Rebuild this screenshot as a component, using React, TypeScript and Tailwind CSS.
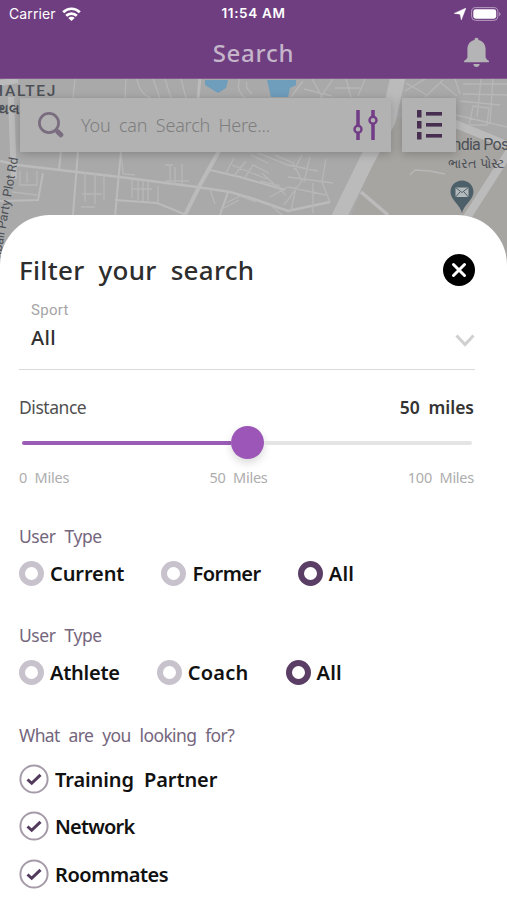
import React from "react";

function StatusBar() {
  return (
    <div className="relative flex h-[28px] items-center justify-between pl-[9px] pr-[6px] font-['Inter',sans-serif] text-white">
      <div className="flex items-center gap-[6px]">
        <span className="text-[14px] leading-none tracking-[0.12px]">Carrier</span>
        <svg width="19" height="14" viewBox="0 0 19 14" fill="none" stroke="#fff" strokeWidth="2.7">
          <path d="M1.2 5.2C5.8 .6 13.2 .6 17.8 5.2" />
          <path d="M4.2 8.7C7.1 5.8 11.9 5.8 14.8 8.7" />
          <path d="M9.5 13.900 6.300 11C8 9.200 11 9.200 12.700 11Z" fill="#fff" stroke="none" />
        </svg>
      </div>
      <span className="absolute inset-x-0 text-center text-[13.5px] font-semibold leading-none tracking-[0.65px]">11:54 AM</span>
      <div className="flex items-center gap-[5px]">
        <svg width="12" height="12" viewBox="0 0 12 12" fill="#fff">
          <path d="M12 0 7.300 12 6.100 6.200 0 5.400Z" stroke="#fff" strokeWidth=".4" />
        </svg>
        <svg width="30" height="14" viewBox="0 0 30 14">
          <rect x=".6" y=".6" width="26.3" height="12.8" rx="4" fill="none" stroke="#b69bc0" />
          <rect x="2.3" y="2.3" width="22.9" height="9.4" rx="2.4" fill="#fff" />
          <path d="M28.2 5v4.2c1.8-.8 1.8-3.4 0-4.2Z" fill="#b69bc0" />
        </svg>
      </div>
    </div>
  );
}

function Header() {
  return (
    <header className="h-[79px] border-b border-[#81598f] bg-[#6f3e81]">
      <StatusBar />
      <div className="relative flex h-[50px] items-center justify-center">
        <h1 className="text-[24px] font-medium leading-none tracking-[0.75px] text-[#c5b5ca]">Search</h1>
        <svg className="absolute right-[17px] top-[9px]" width="27" height="31" viewBox="0 0 27 31" fill="#b4b3b5">
          <path d="M13.5 .8c1.3 0 2 .9 2 2.2 4.7 1.1 7.1 4.7 7.1 9.4v8l1.5 2.4 1.8 1v1.5H1.1v-1.5l1.8-1 1.5-2.4v-8C4.4 7.7 6.8 4.1 11.5 3c0-1.3.7-2.2 2-2.2Z" />
          <path d="M10.3 27h6.4c-.3 2.1-1.4 3-3.2 3s-2.9-.9-3.2-3Z" />
        </svg>
      </div>
    </header>
  );
}

function MapBackground() {
  return (
    <svg className="absolute inset-0" width="507" height="190" viewBox="0 0 507 190" fill="none">
      <rect width="507" height="190" fill="#a9a9a9" />
      <path d="M395 38 507 60V190H330L370 90Z" fill="#a7a5a2" />
      <path d="M205 1h23l-2 8-8 5-13-8Z" fill="#6f9dbc" />
      <path d="M267 1h29v5l-6 3-2 9h-17Z" fill="#6f9dbc" />
      <g stroke="#bbbbbb">
        <path d="M11 18 14 100M0 4 18 1" strokeWidth="6" />
        <path d="M398-2 388 42 366 83 338 140" strokeWidth="15" />
        <path d="M453 44 507 66M511 70 466 140" strokeWidth="8" />
        <path d="M361 113 388 136" strokeWidth="3.5" />
        <path d="M219 72 200 106 184 138" strokeWidth="4" />
        <path d="M200-2 198 20" strokeWidth="3" />
        <path d="M0 82 17 86 77 93 120 98 197 108 230 113 254 120 288 132 330 123" strokeWidth="2.6" />
        <path d="M78 72 73 136M121 72 115 138M61 72 59 91M115 121 157 124 184 135M210 91 240 98 285 111M228 113 220 136M0 122 38 121 43 94" strokeWidth="2" />
      </g>
      <g stroke="#b7b7b7" strokeWidth="1.3">
        <path d="M75 0 73 19M126 0 125 19M137 0c2 12 8 17 14 19M153 0l7 19M165 0l6 19M181 0l5 19M240 0c-4 8 0 16 6 19M247 3c-2 5 1 8 5 12" />
        <path d="M121 72 123 95 135 96M20 92v14h17V92M27 93v11M12 113l25 3M85 93v30M95 94v31M104 96v25M82 115h20M81 128h14M132 101v18M138 102v19M143 102v20M148 103v20M132 110h20M158 107v16M170 86v16M175 88v18M182 85v20M165 102h24M165 86h8" />
        <path d="M226 94 234 79M234 97 246 82M244 100l9-14 16 8M210 110l5 15M226 124l14-7 16 6M220 131l19-10M232 86l35 14M251 76l17 8M258 74l30 12 30 6M275 76l18 8 9 18-18 24M302 76l-8 15M310 78l-6 25M326 80l-4 23M288 98l45 6M262 94l24 22M270 118l18-10 38 8M296 108l-5 24M313 104v30M268 124l14 12M322 103l8 20M260 102l20 5" />
        <path d="M291 18l12-16M304 10l28 7M312 0l11 19M333 0l-13 19M346 0l5 18M365 0l-7 17M335 9h25M405 12l20-12M406 4l21 12M425 18l18-17M440 3l17 14M455 0l5 15M463 5h44M463 15l44 1M481 0l-4 38M493 0l-3 44M460 22l40 4M456 36l51 12M473 27l16 2-2 17h-18Z" />
        <path d="M410 96l5-5 15 1 15 3" />
      </g>
    </svg>
  );
}

function MapLabels() {
  return (
    <div className="absolute inset-0 font-['Roboto','Noto_Sans',sans-serif] text-[#4d5157]">
      <span className="absolute left-[-8px] top-[3px] text-[15.500px] font-medium leading-[18px] tracking-[1.75px]">HALTEJ</span>
      <span className="absolute left-[-2px] top-[23px] text-[14px] font-bold leading-[14px]">થલ</span>
      <span className="absolute left-[-54px] top-[117px] w-[120px] rotate-[-80deg] whitespace-nowrap text-[12.500px] leading-[14px]">mbali Party Plot Rd</span>
      <span className="absolute left-[449px] top-[56px] whitespace-nowrap text-[16px] leading-[20px] tracking-[-0.75px]">India Post</span>
      <span className="absolute left-[448px] top-[77px] whitespace-nowrap text-[12.500px] leading-[15px]">ભારત પોસ્ટ</span>
      <svg className="absolute left-[450px] top-[101px]" width="24" height="34" viewBox="0 0 24 34">
        <path d="M12 .5C5.5.5.5 5.5.5 12c0 8 10 13 11.5 21C13.500 25 23.500 20 23.500 12 23.500 5.500 18.500.5 12 .5Z" fill="#4d6069" />
        <rect x="5.500" y="7.500" width="13" height="9.500" fill="#b5babd" />
        <path d="m5.500 7.500 6.500 5 6.500-5M5.500 17l4.500-5M18.500 17 14 12" stroke="#4d6069" fill="none" />
      </svg>
    </div>
  );
}

function SearchRow() {
  return (
    <div className="relative flex gap-[11px] pl-5 pt-[19px]">
      <div className="flex h-[54px] w-[371px] items-center bg-[#b2b2b2] pl-[18px] pr-[12px] shadow-[0_2px_9px_rgba(0,0,0,0.22)]">
        <svg width="26" height="26" viewBox="0 0 26 26" fill="none" stroke="#7a6d7f">
          <circle cx="11" cy="11" r="9.600" strokeWidth="2.700" />
          <path d="m17.500 17.500 2 2" strokeWidth="3" />
          <path d="m20 20 2.800 2.800" strokeWidth="5" strokeLinecap="round" />
        </svg>
        <span className="ml-[17px] flex-1 whitespace-nowrap text-[18px] font-light leading-none tracking-[-0.2px] text-[#7e7e7e] [word-spacing:4px]">You can Search Here...</span>
        <svg width="26" height="30" viewBox="0 0 26 30" fill="none" stroke="#723c86" strokeWidth="3.500">
          <path d="M5 0v15M5 23v7M20 0v6M20 14v16" />
          <circle cx="5" cy="19.300" r="3.500" strokeWidth="2.400" />
          <circle cx="20" cy="10.300" r="3.500" strokeWidth="2.400" />
        </svg>
      </div>
      <div className="flex h-[54px] w-[54px] items-center justify-center bg-[#b2b2b2] shadow-[0_2px_9px_rgba(0,0,0,0.22)]">
        <svg width="26" height="30" viewBox="0 0 26 30" fill="#482e51">
          <rect x="1" y="0" width="4.500" height="7.500" />
          <rect x="1" y="11" width="4.500" height="7.500" />
          <rect x="1" y="22" width="4.500" height="7.500" />
          <rect x="10" y="2" width="16" height="3.600" />
          <rect x="10" y="13" width="16" height="3.600" />
          <rect x="10" y="24" width="16" height="3.600" />
        </svg>
      </div>
    </div>
  );
}

type OptionProps = { label: string; spacing: string; selected?: boolean };

function Radio({ label, spacing, selected = false }: OptionProps) {
  return (
    <label className="flex items-center gap-[6px]">
      <span className={`h-[25px] w-[25px] rounded-full border-[6px] ${selected ? "border-[#5a3e66]" : "border-[#c8c2cd]"}`} />
      <span className={`text-[20px] font-semibold leading-[25px] text-[#111] ${spacing}`}>{label}</span>
    </label>
  );
}

function Check({ label, spacing }: OptionProps) {
  return (
    <label className="flex h-[47.500px] items-center gap-[6px]">
      <svg width="30" height="30" viewBox="0 0 30 30" fill="none">
        <circle cx="15" cy="15" r="13.600" stroke="#a59ba9" strokeWidth="2" />
        <path d="m8.500 15.500 4.200 3.800 8.800-8.500" stroke="#523a5d" strokeWidth="3" />
      </svg>
      <span className={`relative top-px text-[20px] font-semibold leading-[26px] text-[#111] [word-spacing:5px] ${spacing}`}>{label}</span>
    </label>
  );
}

function FilterSheet() {
  return (
    <main className="relative -mt-[54px] h-[685px] rounded-t-[50px] bg-white pl-[19px] pr-[32px] pt-[38px]">
      <div className="flex h-[34px] items-center justify-between">
        <h2 className="whitespace-nowrap text-[26px] font-medium leading-[34px] tracking-[0.3px] text-[#2d2d2d] [word-spacing:7px]">Filter your search</h2>
        <svg width="32" height="32" viewBox="0 0 32 32" fill="none">
          <circle cx="16" cy="16" r="16" fill="#000" />
          <path d="m10.500 10.500 11 11M21.500 10.500l-11 11" stroke="#fff" strokeWidth="3" strokeLinecap="round" />
        </svg>
      </div>
      <div className="h-[83px] border-b border-[#dadada] pl-[12px] pt-[14px]">
        <div className="font-['Roboto',sans-serif] text-[15px] leading-[18px] tracking-[0.3px] text-[#a5a5a5]">Sport</div>
        <div className="mt-[6px] flex items-center justify-between">
          <span className="text-[20px] font-medium leading-[26px] tracking-[0.4px] text-[#303030]">All</span>
          <svg className="relative top-[2px]" width="20" height="13" viewBox="0 0 20 13" fill="none">
            <path d="m1.500 1.500 8.500 9 8.500-9" stroke="#d0d0d0" strokeWidth="3" />
          </svg>
        </div>
      </div>
      <div className="mt-[25px] flex h-[24px] items-center justify-between pr-px text-[17.500px]">
        <span className="tracking-[-0.45px] text-[#505050]">Distance</span>
        <span className="font-semibold text-[#333] [word-spacing:4px]">50 miles</span>
      </div>
      <div className="ml-[3px] mr-[3px] mt-[7px] flex h-[33px] items-center">
        <div className="h-[4px] flex-1 rounded-l-full bg-[#9b5cb7]" />
        <div className="h-[33px] w-[33px] rounded-full bg-[#9b56b8] shadow-[0_4px_8px_rgba(0,0,0,0.15)]" />
        <div className="h-[4px] flex-1 rounded-r-full bg-[#e4e4e4]" />
      </div>
      <div className="mt-[9px] flex h-[20px] items-center justify-between pr-px text-[14.500px] tracking-[-0.25px] text-[#adadad] [word-spacing:4px]">
        <span>0 Miles</span>
        <span>50 Miles</span>
        <span>100 Miles</span>
      </div>
      <div className="mt-[36px] text-[17.500px] leading-[24px] tracking-[-0.45px] text-[#74667d] [word-spacing:5px]">User Type</div>
      <div className="mt-[13px] flex gap-[37px]">
        <Radio label="Current" spacing="tracking-[-0.1px]" />
        <Radio label="Former" spacing="tracking-[-0.5px]" />
        <Radio label="All" spacing="tracking-[0.2px]" selected />
      </div>
      <div className="mt-[37px] text-[17.500px] leading-[24px] tracking-[-0.45px] text-[#74667d] [word-spacing:5px]">User Type</div>
      <div className="mt-[13px] flex gap-[37px]">
        <Radio label="Athlete" spacing="tracking-[-0.25px]" />
        <Radio label="Coach" spacing="tracking-[0.25px]" />
        <Radio label="All" spacing="tracking-[0.2px]" selected />
      </div>
      <div className="mt-[38px] whitespace-nowrap text-[17.500px] leading-[24px] tracking-[-0.63px] text-[#74667d] [word-spacing:5px]">What are you looking for?</div>
      <div className="mt-[8px] flex flex-col">
        <Check label="Training Partner" spacing="tracking-[-0.1px]" />
        <Check label="Network" spacing="tracking-[-0.8px]" />
        <Check label="Roommates" spacing="tracking-[-0.45px]" />
      </div>
    </main>
  );
}

export default function App() {
  return (
    <div className="h-[900px] w-[507px] overflow-hidden bg-white font-['Noto_Sans',sans-serif]">
      <Header />
      <section className="relative h-[190px] overflow-hidden">
        <MapBackground />
        <MapLabels />
        <SearchRow />
      </section>
      <FilterSheet />
    </div>
  );
}
